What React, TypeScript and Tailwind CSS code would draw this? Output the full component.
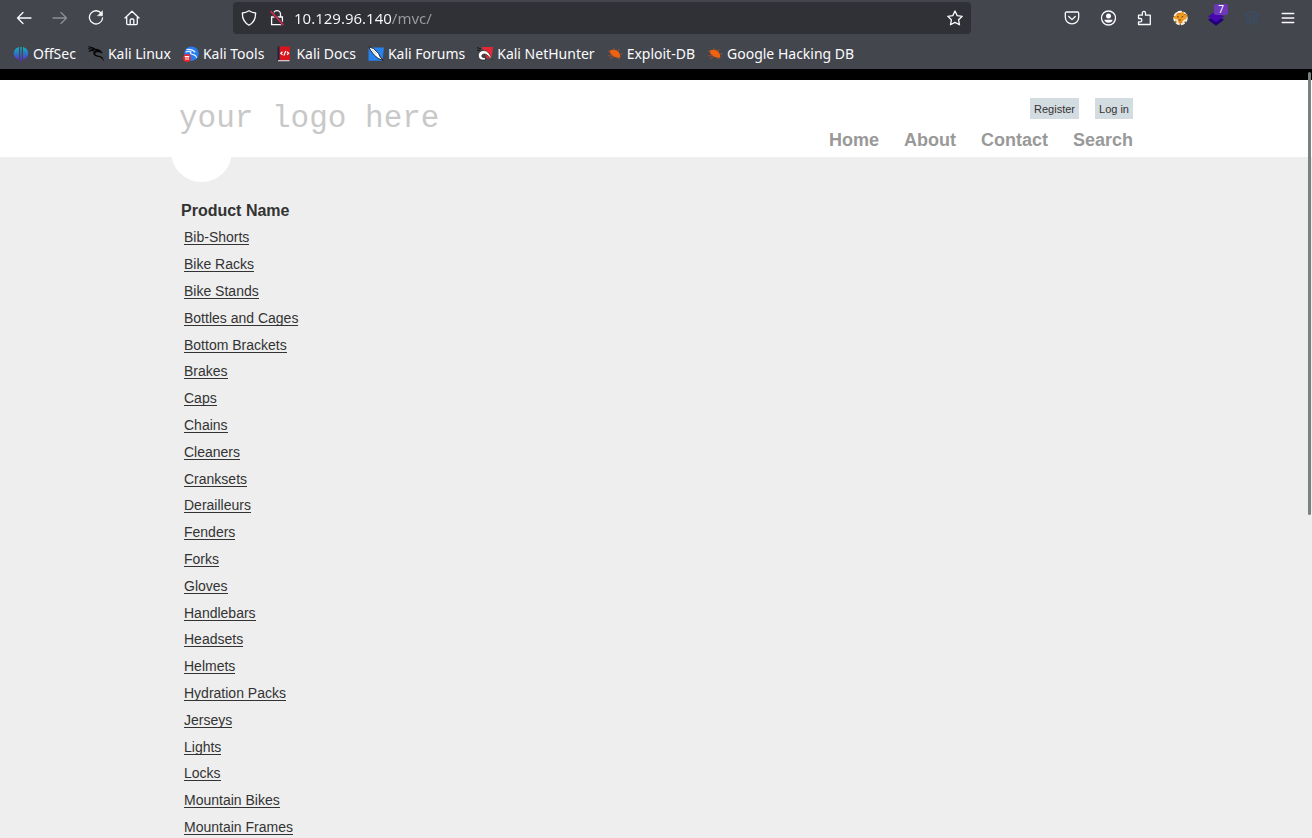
import React from "react";

const bookmarkIcons: Record<string, React.ReactNode> = {
  offsec: (
    <svg viewBox="0 0 16 16" className="size-4" aria-hidden="true">
      <defs>
        <linearGradient id="os" gradientUnits="userSpaceOnUse" x1="0" y1="1" x2="0" y2="15">
          <stop offset="0" stopColor="#14b0ba" />
          <stop offset="0.5" stopColor="#2f72c4" />
          <stop offset="1" stopColor="#6424d8" />
        </linearGradient>
      </defs>
      <path d="M6 1v13C2.500 12.500.7 10.200.7 7.400.7 4.400 3 1.800 6 1zM10 1v13c3.500-1.500 5.300-3.800 5.300-6.600C15.300 4.400 13 1.800 10 1zM7.300 1h1.400v14.500H7.300z" fill="url(#os)" />
    </svg>
  ),
  dragon: (
    <svg viewBox="0 0 16 16" className="size-4" aria-hidden="true">
      <path d="M.3.800c2.500.2 4.800.9 6.700 2.200M.3 2.700c2.300-.1 4.200.2 6 1.100M.8 5.200c1.800-.8 3.500-1 5.200-.6" fill="none" stroke="#050505" strokeWidth="1.100" />
      <path d="M5.500 3c3-.8 6.300 0 8 2.600l1.300 2-3.200-1.100C9.600 5.900 7.400 6.200 7.200 7.500c-.1 1.400 1.900 1.800 3.900 2.200 3 .5 4.600 2.300 4.600 6-1-2.900-2.500-4.300-5-4.700-3-.4-5.500-1.500-5.400-4C5.400 5.400 6.400 4.600 7.500 4.200z" fill="#050505" />
    </svg>
  ),
  tools: (
    <svg viewBox="0 0 16 16" className="size-4" aria-hidden="true">
      <circle cx="8.500" cy="7.700" r="7.200" fill="#267bf0" />
      <path d="M3.500 3.600c3.500-.6 6.500 0 8.800 2.700M2.500 6c2.500-1 4.300-.8 6 0M7.500 5.300c-.8 2.500 1 3 3 3.300 1.700.3 2.800 1.400 3.200 3.200" fill="none" stroke="#e8f2ff" strokeWidth="1.100" />
      <circle cx="4" cy="12" r="3.900" fill="#e8262d" />
      <path d="M1.700 10.500h4.600M3 10.500V14M5.100 10.500V14" stroke="#fff" strokeWidth="1" />
    </svg>
  ),
  docs: (
    <svg viewBox="0 0 16 16" className="size-4" aria-hidden="true">
      <path d="M1.500.500H4V15H1.500z" fill="#1d2442" />
      <path d="M3.500.500h10.500V14H3.500z" fill="#d9141c" />
      <path d="M2 14h11.500v1.300H2z" fill="#d8c4c8" />
      <path d="M6.500 5.700 4.800 7.300l1.700 1.600M11 5.700l1.700 1.600L11 8.900M9.700 5 7.900 9.600" fill="none" stroke="#fff" strokeWidth="1.200" />
    </svg>
  ),
  forums: (
    <svg viewBox="0 0 16 16" className="size-4" aria-hidden="true">
      <path d="M.5 1.500H16l-1.500 13.200H.5z" fill="#2582ee" />
      <path d="m.5.800 5 1.700 5 4.800L12.200 11l3 3.300-5-1.800-4-3.500L3 5z" fill="#fff" stroke="#171b24" strokeWidth=".9" />
      <path d="m4.500 4 4 4" stroke="#9aa2aa" strokeWidth=".7" />
    </svg>
  ),
  nethunter: (
    <svg viewBox="0 0 16 16" className="size-4" aria-hidden="true">
      <path d="M4.500 1H16l-1.300 11.500H10z" fill="#e62736" />
      <path d="M0 1.500 4 3M0 4l3 .5" stroke="#171717" strokeWidth="1" />
      <path d="M8.500 13.800C4.500 14.800 1.500 13 1.300 10 1.200 6.500 4 4.300 7 4.500c4 .3 5.700 3.500 8.300 9C12.500 11.500 10 8 7.500 8c-1.900 0-2.900 1.100-2.700 2.200.2 1.200 1.600 1.600 3.400 1z" fill="#fff" stroke="#171717" strokeWidth=".7" />
    </svg>
  ),
  bug: (
    <svg viewBox="0 0 16 16" className="size-4" aria-hidden="true">
      <path d="M2.500 4.800C5 3 9.500 3.300 11.600 6c1.200 1.500 1.700 3.200 1.700 5.800-3.300 0-6.500-.8-8.500-2.800C3.500 7.700 2.600 6.400 2.500 4.800z" fill="#f0620f" />
      <path d="M1 5.500h3M1 9.800h4M3 12.800 7 10.500M7.500 4 6.700 2M11 5.500l1-2.500M13 8h2.500M10.500 11.500l1.500 2" stroke="#a8532f" strokeWidth=".8" fill="none" />
    </svg>
  ),
};

const bookmarks = [
  ["OffSec", "offsec"],
  ["Kali Linux", "dragon"],
  ["Kali Tools", "tools"],
  ["Kali Docs", "docs"],
  ["Kali Forums", "forums"],
  ["Kali NetHunter", "nethunter"],
  ["Exploit-DB", "bug"],
  ["Google Hacking DB", "bug"],
];

const products = [
  "Bib-Shorts", "Bike Racks", "Bike Stands", "Bottles and Cages", "Bottom Brackets", "Brakes",
  "Caps", "Chains", "Cleaners", "Cranksets", "Derailleurs", "Fenders", "Forks", "Gloves",
  "Handlebars", "Headsets", "Helmets", "Hydration Packs", "Jerseys", "Lights", "Locks",
  "Mountain Bikes", "Mountain Frames",
];

function Glyph({ children }: { children: React.ReactNode }) {
  return (
    <svg viewBox="0 0 16 16" className="size-4" fill="none" stroke="currentColor" strokeWidth="1.300" strokeLinecap="round" strokeLinejoin="round" aria-hidden="true">
      {children}
    </svg>
  );
}

function ToolButton({ label, disabled, children }: { label: string; disabled?: boolean; children: React.ReactNode }) {
  return (
    <button type="button" aria-label={label} disabled={disabled} className="relative flex h-8 w-9 items-center justify-center disabled:opacity-40">
      {children}
    </button>
  );
}

function Toolbar() {
  return (
    <div className="flex items-center px-1.5 pt-0.5">
      <div className="flex">
        <ToolButton label="Back"><Glyph><path d="M15 8H1.500M7 2.500 1.500 8 7 13.500" /></Glyph></ToolButton>
        <ToolButton label="Forward" disabled><Glyph><path d="M1 8h13.500M9 2.500 14.500 8 9 13.500" /></Glyph></ToolButton>
        <ToolButton label="Reload">
          <Glyph>
            <path d="M13.600 3.800A6.600 6.600 0 1 0 14.600 8" />
            <path d="M14.500 1v4.800H9.700z" fill="currentColor" strokeWidth=".5" />
          </Glyph>
        </ToolButton>
        <ToolButton label="Home">
          <Glyph><path d="M1 8 8 1.300 15 8M2.700 7v6.500c0 .7.400 1.100 1.100 1.100h8.400c.7 0 1.100-.4 1.100-1.100V7M6.200 14.400V10c0-.6.400-1 1-1h1.600c.6 0 1 .4 1 1v4.400" /></Glyph>
        </ToolButton>
      </div>
      <div className="ml-[83px] flex h-8 max-w-[738px] flex-1 items-center rounded bg-[#303136] px-2">
        <button type="button" aria-label="Tracking protection" className="flex">
          <Glyph><path d="M8 .8c2 1.400 4 2 6.600 2.200.2 5.400-1.700 9.500-6.600 12.200C3.100 12.500 1.200 8.400 1.400 3 4 2.800 6 2.200 8 .8z" /></Glyph>
        </button>
        <button type="button" aria-label="Connection not secure" className="ml-3 flex">
          <svg viewBox="0 0 16 16" className="size-4" fill="none" stroke="#fbfbfe" strokeWidth="1.300" aria-hidden="true">
            <path d="M4.500 7V4.200a3.500 3.500 0 0 1 7 0V7M2.600 7h10.800v7.700H2.600z" />
            <path d="m1.500 1 13 14" stroke="#303136" strokeWidth="3" />
            <path d="m1.500 1 13 14" stroke="#e22850" strokeWidth="1.500" />
          </svg>
        </button>
        <input
          type="text"
          aria-label="Address"
          defaultValue="10.129.96.140/mvc/"
          className="ml-[9px] min-w-0 flex-1 bg-[linear-gradient(90deg,#fbfbfe_98px,#9b9ba0_98px)] bg-clip-text text-[15px] text-transparent caret-white outline-none"
        />
        <button type="button" aria-label="Bookmark this page" className="flex">
          <Glyph><path d="m8 1 2.200 4.600 5 .7-3.600 3.500.9 5L8 12.400l-4.500 2.400.9-5L.8 6.300l5-.7z" /></Glyph>
        </button>
      </div>
      <div className="ml-auto flex">
        <ToolButton label="Pocket">
          <Glyph><path d="M2.500 2h11c.7 0 1.200.5 1.200 1.200v4a6.700 6.700 0 0 1-13.400 0v-4C1.300 2.500 1.800 2 2.500 2zM4.800 6.500 8 9.600l3.200-3.100" /></Glyph>
        </ToolButton>
        <ToolButton label="Account">
          <Glyph>
            <circle cx="8.500" cy="8" r="7" />
            <circle cx="8.500" cy="6" r="2.500" fill="currentColor" stroke="none" />
            <path d="M4.300 9.700h8.400c-.4 1.900-2.100 3-4.200 3s-3.800-1.100-4.200-3z" fill="currentColor" stroke="none" />
          </Glyph>
        </ToolButton>
        <ToolButton label="Extensions">
          <Glyph><path d="M2.500 8.500V5.200h3.800V3a1.600 1.600 0 0 1 3.200 0v2.200h4.800v9.300H2.500v-2.700h1.700a1.650 1.650 0 0 0 0-3.300z" /></Glyph>
        </ToolButton>
        <ToolButton label="FoxyProxy">
          <svg viewBox="0 0 16 16" className="size-4" aria-hidden="true">
            <circle cx="8.500" cy="8" r="6.300" fill="#d9831c" stroke="#f4efe6" strokeWidth="1.900" strokeDasharray="4 1.300" />
            <path d="M1.500 7.500 4.500 5 8 4.500l3-3 1.500 2.500 3 .5-1 4-2.500 3.500-3.500-.5L4.500 13 3 9.500z" fill="#f09a22" />
            <path d="M2 9.500l3 .5 1 3M10.500 12.500l3-3M5 2.500l3-.8" fill="none" stroke="#fff" strokeWidth="1.200" />
            <path d="m5 6.500 2 .8M9.500 7.200l1.800-1M6.500 10h2.500M12.500 4l1 1" stroke="#5f4523" strokeWidth="1" />
          </svg>
        </ToolButton>
        <ToolButton label="Wappalyzer">
          <svg viewBox="0 0 16 16" className="size-4" aria-hidden="true">
            <path d="M0 9.800 8 5l8 4.800-8 6z" fill="#22007a" />
            <path d="M0 6.500 8 1l8 5.500-8 5.700z" fill="#4608ad" />
          </svg>
          <span className="absolute top-0.5 right-1.5 h-[11px] w-3.5 rounded-xs bg-[#6c38b8] font-['Noto_Sans',sans-serif] text-[10px] leading-[11px] text-white">7</span>
        </ToolButton>
        <ToolButton label="Extension">
          <svg viewBox="0 0 16 16" className="size-4" fill="none" stroke="#364f6b" strokeWidth="1.200" aria-hidden="true">
            <path d="M8 1.500 13 4v7l-5 3.500L3 11V4zM1 5l3 2M12 7l3-2M1 12l3-2M12 10l3 2M5 6h2v4H5M9 6h2L9 10h2" />
          </svg>
        </ToolButton>
        <ToolButton label="Menu"><Glyph><path d="M2.200 3.500h11.600M2.200 8h11.600M2.200 12.500h11.600" /></Glyph></ToolButton>
      </div>
    </div>
  );
}

export default function App() {
  return (
    <div className="flex h-screen flex-col overflow-hidden bg-[#eeeeee]">
      <div className="shrink-0 bg-[#44464d] font-['Noto_Sans',sans-serif] text-[#fbfbfe]">
        <Toolbar />
        <nav aria-label="Bookmarks" className="flex items-center gap-3 pt-2.5 pb-[5px] pl-[13px]">
          {bookmarks.map(([name, icon]) => (
            <a key={name} href="#" className="flex items-center gap-1 text-[14px] leading-5 whitespace-nowrap">
              {bookmarkIcons[icon]}
              {name}
            </a>
          ))}
        </nav>
      </div>
      <div className="relative min-h-0 flex-1">
        <div className="h-full overflow-y-auto font-['Liberation_Sans',Arial,sans-serif] text-[#333333] [scrollbar-width:none]">
          <header className="h-[88px] border-t-[11px] border-black bg-white">
            <div className="relative mx-auto flex max-w-[954px] justify-between">
              <span aria-hidden="true" className="absolute top-[41px] -left-2 size-[61px] rounded-full bg-white" />
              <a href="#" className="relative pt-[19px] font-['Liberation_Mono',monospace] text-[31px] leading-10 text-[#c8c8c8]">your logo here</a>
              <div className="flex flex-col items-end pt-[18px]">
                <div className="flex gap-4 text-[11px] leading-5">
                  <a href="#" className="bg-[#d3dce0] px-1 pt-px">Register</a>
                  <a href="#" className="bg-[#d3dce0] px-1 pt-px">Log in</a>
                </div>
                <nav aria-label="Main" className="flex gap-[25px] pt-2.5 text-[18px] leading-[22px] font-bold text-[#999999]">
                  <a href="#">Home</a>
                  <a href="#">About</a>
                  <a href="#">Contact</a>
                  <a href="#">Search</a>
                </nav>
              </div>
            </div>
          </header>
          <main className="mx-auto max-w-[954px] pt-[41px]">
            <table className="border-collapse text-left">
              <thead>
                <tr>
                  <th className="pl-0.5 text-[16px] leading-[26px] font-bold">Product Name</th>
                </tr>
              </thead>
              <tbody>
                {products.map((p) => (
                  <tr key={p} className="h-[27px] nth-[5n+1]:h-[26px]">
                    <td className="p-0 pl-[5px] text-[14px] leading-4">
                      <a href="#" className="inline-block border-b border-[#333333] leading-[14px]">{p}</a>
                    </td>
                  </tr>
                ))}
              </tbody>
            </table>
          </main>
        </div>
        <div aria-hidden="true" className="absolute top-[3px] right-px h-[57.6%] w-[3px] rounded-full bg-[#7b8080]" />
      </div>
    </div>
  );
}
